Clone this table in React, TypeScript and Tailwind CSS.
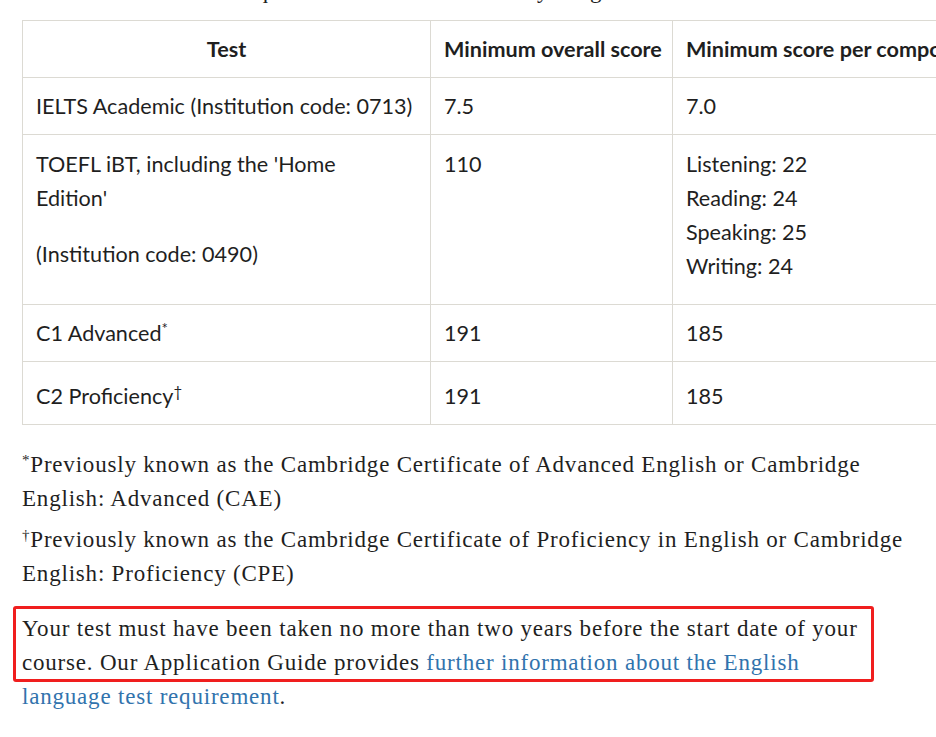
const serif = "font-['Liberation_Serif',serif] text-[23px] tracking-[0.8px] leading-[34px]";
const sans = "font-['Lato',sans-serif]";

const rows = [
  { test: "IELTS Academic (Institution code: 0713)", overall: "7.5", component: "7.0" },
  { test: "C1 Advanced", mark: "*", overall: "191", component: "185" },
  { test: "C2 Proficiency", mark: "†", overall: "191", component: "185" },
];

const cell = "border border-[#dcdad3] px-[13px] align-top";

export default function App() {
  return (
    <div className="min-h-screen bg-white text-[#1f1f1f]">
      {/* tail of the previous paragraph, scrolled off the top */}
      <p className={`${serif} pl-[22px] -mt-[26px] h-[34px] whitespace-nowrap overflow-hidden`}>
        The minimum scores required to meet the University's higher level are shown in the table below.
      </p>

      <div className="overflow-hidden pl-[22px] mt-[12px]">
        <table className={`${sans} text-[21.6px] leading-[34px] border-collapse w-[1100px] table-fixed`}>
          <colgroup>
            <col className="w-[408px]" />
            <col className="w-[242px]" />
            <col />
          </colgroup>
          <thead>
            <tr>
              <th className={`${cell} py-[11px] text-center font-bold`}>Test</th>
              <th className={`${cell} py-[11px] text-left font-bold whitespace-nowrap`}>Minimum overall score</th>
              <th className={`${cell} py-[11px] text-left font-bold whitespace-nowrap`}>Minimum score per component</th>
            </tr>
          </thead>
          <tbody>
            <tr>
              <td className={`${cell} py-[11px] whitespace-nowrap`}>{rows[0].test}</td>
              <td className={`${cell} py-[11px]`}>{rows[0].overall}</td>
              <td className={`${cell} py-[11px]`}>{rows[0].component}</td>
            </tr>
            <tr>
              <td className={`${cell} pt-[12px] pb-[33px]`}>
                <p className="mb-[22px]">
                  TOEFL iBT, including the 'Home
                  <br />
                  Edition'
                </p>
                <p>(Institution code: 0490)</p>
              </td>
              <td className={`${cell} pt-[12px]`}>110</td>
              <td className={`${cell} pt-[12px] pb-[21px]`}>
                <div>Listening: 22</div>
                <div>Reading: 24</div>
                <div>Speaking: 25</div>
                <div>Writing: 24</div>
              </td>
            </tr>
            {rows.slice(1).map((r, i) => (
              <tr key={r.test}>
                <td className={`${cell} ${i === 1 ? "pt-[17px] pb-[11px]" : "py-[11px]"}`}>
                  {r.test}
                  <sup className="text-[15px]">{r.mark}</sup>
                </td>
                <td className={`${cell} ${i === 1 ? "pt-[17px] pb-[11px]" : "py-[11px]"}`}>{r.overall}</td>
                <td className={`${cell} ${i === 1 ? "pt-[17px] pb-[11px]" : "py-[11px]"}`}>{r.component}</td>
              </tr>
            ))}
          </tbody>
        </table>
      </div>

      <div className={`${serif} px-[22px] mt-[23px] whitespace-nowrap`}>
        <p>
          <sup className="text-[15px]">*</sup>Previously known as the Cambridge Certificate of Advanced English or Cambridge
          <br />
          English: Advanced (CAE)
        </p>
        <p className="mt-[7px]">
          <sup className="text-[15px]">†</sup>Previously known as the Cambridge Certificate of Proficiency in English or Cambridge
          <br />
          English: Proficiency (CPE)
        </p>
        <div className="relative mt-[21px]">
          <p>
            Your test must have been taken no more than two years before the start date of your
            <br />
            course. Our Application Guide provides{" "}
            <a href="#" className="text-[#3173ad]">
              further information about the English
              <br />
              language test requirement
            </a>
            .
          </p>
          {/* highlight drawn over the paragraph */}
          <div className="absolute left-[-9px] top-[-6px] w-[861px] h-[76px] border-[3px] border-[#f01e1e] rounded-[3px] pointer-events-none" />
        </div>
      </div>
    </div>
  );
}
